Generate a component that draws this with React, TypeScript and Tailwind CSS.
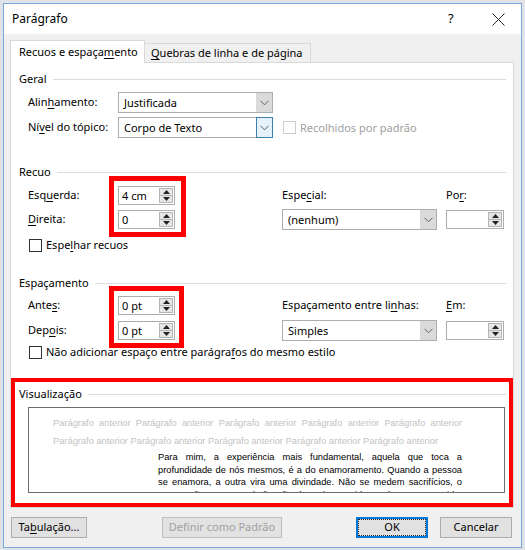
import type { ReactNode } from "react";

function U({ children }: { children: ReactNode }) {
  return <span className="underline decoration-1 underline-offset-2">{children}</span>;
}

function Chevron({ color = "#606060" }: { color?: string }) {
  return (
    <svg width="9" height="6" viewBox="0 0 9 6" fill="none">
      <path d="M0.5 0.8 L4.5 4.8 L8.5 0.8" stroke={color} strokeWidth="1" />
    </svg>
  );
}

function Select({ value, focused = false }: { value: string; focused?: boolean }) {
  return (
    <div className="flex h-[21px] w-[155px] border border-[#adadad] bg-white">
      <div className="flex-1 pl-[5px] leading-[19px]">{value}</div>
      <div
        className={
          focused
            ? "flex w-[17px] items-center justify-center border border-[#3c7fb1] bg-[#e5f1fb] -my-px -mr-px"
            : "flex w-[16px] items-center justify-center bg-[#dadada]"
        }
      >
        <Chevron />
      </div>
    </div>
  );
}

function Spin({ value, w = "w-[57px]" }: { value: string; w?: string }) {
  return (
    <div className={`flex h-[19px] ${w} border border-[#adadad] bg-white`}>
      <div className="flex-1 pl-[3px] leading-[17px]">{value}</div>
      <div className="my-px mr-px flex w-[14px] flex-col">
        <div className="flex flex-1 items-center justify-center border border-[#b5b5b5] bg-[#e6e6e6]">
          <svg width="7" height="4" viewBox="0 0 7 4">
            <path d="M0 4 L3.5 0 L7 4 Z" fill="#222" />
          </svg>
        </div>
        <div className="flex flex-1 items-center justify-center border border-t-0 border-[#b5b5b5] bg-[#e6e6e6]">
          <svg width="7" height="4" viewBox="0 0 7 4">
            <path d="M0 0 L3.5 4 L7 0 Z" fill="#222" />
          </svg>
        </div>
      </div>
    </div>
  );
}

function Header({ children, pad = "pl-[8px] mr-[7px]" }: { children: ReactNode; pad?: string }) {
  return (
    <div className={`flex h-[16px] items-center gap-[6px] ${pad}`}>
      <span className="leading-[16px]">{children}</span>
      <div className="h-px flex-1 bg-[#dcdcdc]" />
    </div>
  );
}

function Check({ label, disabled = false }: { label: ReactNode; disabled?: boolean }) {
  return (
    <div className={`flex h-[14px] items-center gap-[4px] ${disabled ? "text-[#a0a0a0]" : ""}`}>
      <div
        className={`h-[13px] w-[13px] bg-white border ${disabled ? "border-[#cccccc]" : "border-[#333333]"}`}
      />
      <span className="leading-[14px]">{label}</span>
    </div>
  );
}

function Button({ children, w, primary = false, disabled = false }: { children: ReactNode; w: string; primary?: boolean; disabled?: boolean }) {
  return (
    <div
      className={`flex h-[21px] ${w} items-center justify-center ${
        primary
          ? "border-2 border-[#0078d7] bg-[#e1e1e1]"
          : disabled
            ? "border border-[#bfbfbf] bg-[#cccccc]/40 text-[#a0a0a0]"
            : "border border-[#adadad] bg-[#e1e1e1]"
      }`}
    >
      {primary ? (
        <div className="flex h-full w-full items-center justify-center border border-dotted border-[#222]">
          {children}
        </div>
      ) : (
        children
      )}
    </div>
  );
}

const grayLine = "Parágrafo anterior Parágrafo anterior Parágrafo anterior Parágrafo anterior Parágrafo anterior";
const bodyLines = [
  "Para mim, a experiência mais fundamental, aquela que toca a",
  "profundidade de nós mesmos, é a do enamoramento. Quando a pessoa",
  "se enamora, a outra vira uma divindade. Não se medem sacrifícios, o",
  "tempo não conta, a dedicação é total e a vida ganha outro sentido.",
];

export default function App() {
  return (
    <div className="h-[550px] w-[525px] overflow-hidden bg-[#dfe3e8] pl-[3px] pt-[3px] font-['Noto_Sans',sans-serif] text-[11px] text-black">
      <div className="flex h-[545px] w-[519px] flex-col border border-[#7aa7d8] bg-[#f0f0f0]">
        {/* title bar */}
        <div className="flex h-[30px] items-center bg-white pl-[8px]">
          <span className="flex-1 text-[12px]">Parágrafo</span>
          <span className="w-[20px] text-[13px]">?</span>
          <span className="ml-[23px] mr-[16px] flex w-[14px] justify-center">
            <svg width="13" height="13" viewBox="0 0 13 13">
              <path d="M0.5 0.5 L12.5 12.5 M12.5 0.5 L0.5 12.5" stroke="#222" strokeWidth="1" />
            </svg>
          </span>
        </div>

        <div className="flex flex-col px-[6px] pt-[6px]">
          {/* tabs */}
          <div className="flex items-end">
            <div className="relative z-10 -mb-px flex h-[23px] w-[135px] items-start border border-b-0 border-[#d9d9d9] bg-white pl-[8px] pt-[3px]">
              Recuos e espaça<U>m</U>ento
            </div>
            <div className="flex h-[19px] w-[166px] items-center border border-l-0 border-b-0 border-[#d9d9d9] bg-[#f0f0f0] pl-[6px]">
              <U>Q</U>uebras de linha e de página
            </div>
          </div>

          {/* panel */}
          <div className="flex w-[504px] flex-col border border-[#d9d9d9] bg-white pt-[8px]">
            <Header>Geral</Header>
            <div className="mt-[5px] flex h-[21px] items-center pl-[17px]">
              <span className="w-[90px]">Alin<U>h</U>amento:</span>
              <Select value="Justificada" />
            </div>
            <div className="mt-[4px] flex h-[21px] items-center pl-[17px]">
              <span className="w-[90px]">Ní<U>v</U>el do tópico:</span>
              <Select value="Corpo de Texto" focused />
              <div className="ml-[10px]">
                <Check label="Recolhidos por padrão" disabled />
              </div>
            </div>

            <div className="mt-[26px]">
              <Header>Recuo</Header>
            </div>
            <div className="mt-[6px] grid grid-cols-[90px_57px_107px_155px_9px_58px] grid-rows-[18px_20px] gap-y-[5px] pl-[17px]">
              <span className="self-center">Esq<U>u</U>erda:</span>
              <div className="relative self-center">
                <Spin value="4 cm" />
                <div className="pointer-events-none absolute -left-[9px] -right-[11px] -top-[10px] -bottom-[32px] border-[5px] border-[#ff0000]" />
              </div>
              <span />
              <span className="self-center">Espe<U>c</U>ial:</span>
              <span />
              <span className="self-center">Po<U>r</U>:</span>

              <span className="self-center"><U>D</U>ireita:</span>
              <div className="self-center">
                <Spin value="0" />
              </div>
              <span />
              <Select value="(nenhum)" />
              <span />
              <div className="self-center">
                <Spin value="" w="w-[58px]" />
              </div>
            </div>
            <div className="mt-[9px] pl-[18px]">
              <Check label={<>Espe<U>l</U>har recuos</>} />
            </div>

            <div className="mt-[23px]">
              <Header>Espaçamento</Header>
            </div>
            <div className="mt-[5px] grid grid-cols-[90px_57px_107px_155px_9px_58px] grid-rows-[18px_20px] gap-y-[6px] pl-[17px]">
              <span className="self-center">Ante<U>s</U>:</span>
              <div className="relative self-center">
                <Spin value="0 pt" />
                <div className="pointer-events-none absolute -left-[9px] -right-[9px] -top-[10px] -bottom-[33px] border-[5px] border-[#ff0000]" />
              </div>
              <span />
              <span className="self-center">Espaçamento entre li<U>n</U>has:</span>
              <span />
              <span className="self-center"><U>E</U>m:</span>

              <span className="self-center">Dep<U>o</U>is:</span>
              <div className="self-center">
                <Spin value="0 pt" />
              </div>
              <span />
              <Select value="Simples" />
              <span />
              <div className="self-center">
                <Spin value="" w="w-[58px]" />
              </div>
            </div>
            <div className="mt-[5px] pl-[18px]">
              <Check label={<>Não adicionar espaço entre parágra<U>f</U>os do mesmo estilo</>} />
            </div>

            {/* preview */}
            <div className="mt-[19px] flex h-[129px] flex-col border-4 border-[#ff0000] pt-[4px]">
              <Header pad="pl-[4px] mr-[3px]">Visualização</Header>
              <div className="ml-[13px] mr-[4px] mt-[5px] h-[86px] overflow-hidden border border-[#6d6d6d] bg-white pt-[6px] font-['Liberation_Sans',Arial,sans-serif] text-[9.3px]">
                <div className="ml-[24px] mr-[42px] text-[#c3c3c3]">
                  <div className="text-justify leading-[18px] [text-align-last:justify]">{grayLine}</div>
                  <div className="leading-[18px]">{grayLine}</div>
                </div>
                <div className="ml-[129px] mr-[42px] mt-px">
                  {bodyLines.map((l) => (
                    <div key={l} className="text-justify leading-[12.5px] [text-align-last:justify]">
                      {l}
                    </div>
                  ))}
                </div>
              </div>
            </div>
          </div>

          {/* buttons */}
          <div className="mt-[9px] flex items-center pl-px">
            <Button w="w-[76px]">
              <span>Ta<U>b</U>ulação...</span>
            </Button>
            <div className="ml-[75px]">
              <Button w="w-[120px]" disabled>Definir como Padrão</Button>
            </div>
            <div className="ml-[74px]">
              <Button w="w-[72px]" primary>OK</Button>
            </div>
            <div className="ml-[12px]">
              <Button w="w-[72px]">Cancelar</Button>
            </div>
          </div>
        </div>
      </div>
    </div>
  );
}
